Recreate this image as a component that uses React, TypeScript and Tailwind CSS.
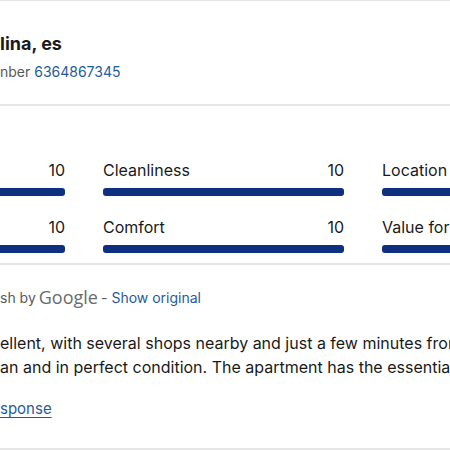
import React from 'react';

const ratings = [
  { label: 'Staff', score: 10 },
  { label: 'Cleanliness', score: 10 },
  { label: 'Location', score: 10 },
  { label: 'Facilities', score: 10 },
  { label: 'Comfort', score: 10 },
  { label: 'Value for money', score: 10 },
];

const RatingBar: React.FC<{ label: string; score: number }> = ({ label, score }) => (
  <div className="flex flex-col">
    <div className="flex h-[24px] items-center justify-between text-[16px] leading-[24px] text-[#1a1a1a]">
      <span className="whitespace-nowrap">{label}</span>
      <span>{score}</span>
    </div>
    <div className="mt-[6px] h-[8px] w-full rounded-[3px] bg-[#e6e6e6]">
      <div className="h-full rounded-[3px] bg-[#0f3080]" style={{ width: `${score * 10}%` }} />
    </div>
  </div>
);

export default function App() {
  return (
    <div
      className="h-[450px] w-[450px] overflow-hidden bg-white"
      style={{ fontFamily: 'Inter, "Noto Sans", sans-serif' }}
    >
      <div className="h-[1px] bg-[#e6e6e6]" />

      <div className="h-[103px] pt-[31px]">
        <h2 className="whitespace-nowrap text-[18px] font-bold leading-[24px] text-[#1a1a1a]">lina, es</h2>
        <p className="mt-[6px] whitespace-nowrap text-[14px] leading-[20px] text-[#595959]">
          nber <span className="text-[#1f5c99]">6364867345</span>
        </p>
      </div>

      <div className="h-[2px] bg-[#e6e6e6]" />

      <div className="h-[157px] pt-[52px]">
        <div className="ml-[-176px] grid w-[720px] grid-cols-[241px_241px_241px] gap-x-[38px] gap-y-[19px]">
          {ratings.map((r) => (
            <RatingBar key={r.label} label={r.label} score={r.score} />
          ))}
        </div>
      </div>

      <div className="h-[2px] bg-[#e6e6e6]" />

      <div className="h-[183px] pt-[20px]">
        <div className="flex h-[24px] items-center whitespace-nowrap text-[14px] text-[#595959]">
          <span>sh by</span>
          <span className="ml-[3px] text-[18px] leading-[20px] text-[#6b6b6b]" style={{ fontFamily: '"Open Sans", sans-serif' }}>
            Google
          </span>
          <span className="ml-[3px]">-</span>
          <span className="ml-[4px] text-[#1f5c99]">Show original</span>
        </div>

        <div className="mt-[22px] whitespace-nowrap text-[16px] leading-[24px] text-[#1a1a1a]">
          <p>ellent, with several shops nearby and just a few minutes from the center.</p>
          <p>an and in perfect condition. The apartment has the essentials.</p>
        </div>

        <div className="mt-[18px] text-[15px] leading-[24px]">
          <a className="text-[#1f5c99] underline underline-offset-[3px]" href="#">sponse</a>
        </div>
      </div>

      <div className="h-[2px] bg-[#e6e6e6]" />
    </div>
  );
}
